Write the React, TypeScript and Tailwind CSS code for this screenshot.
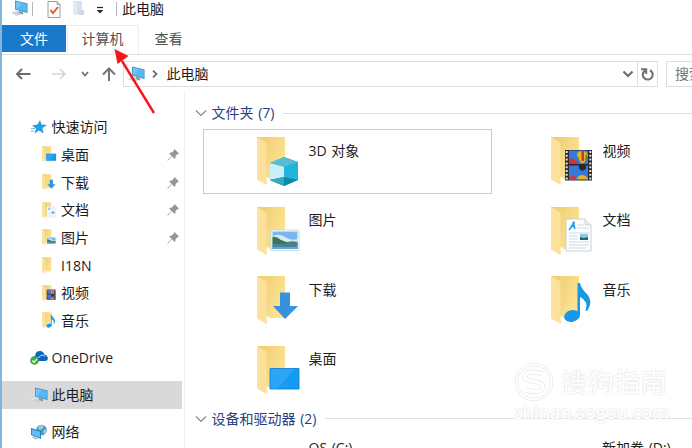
import type { ReactNode } from 'react'

type Kind = 'plain' | 'objects' | 'pictures' | 'downloads' | 'desktop' | 'videos' | 'documents' | 'music'

const quickAccess: { label: string; kind: Kind; pinned: boolean }[] = [
  { label: '桌面', kind: 'desktop', pinned: true },
  { label: '下载', kind: 'downloads', pinned: true },
  { label: '文档', kind: 'documents', pinned: true },
  { label: '图片', kind: 'pictures', pinned: true },
  { label: 'I18N', kind: 'plain', pinned: false },
  { label: '视频', kind: 'videos', pinned: false },
  { label: '音乐', kind: 'music', pinned: false },
]

const folders: { label: string; kind: Kind }[] = [
  { label: '3D 对象', kind: 'objects' },
  { label: '视频', kind: 'videos' },
  { label: '图片', kind: 'pictures' },
  { label: '文档', kind: 'documents' },
  { label: '下载', kind: 'downloads' },
  { label: '音乐', kind: 'music' },
  { label: '桌面', kind: 'desktop' },
]

const selectedTile = 'border-[#a3d6f7]'
const idleTile = 'border-transparent'

function Overlay({ kind }: { kind: Kind }) {
  switch (kind) {
    case 'objects':
      return (
        <g>
          <path d="M16 27 30 21 44 26 44 44 30 50 16 44Z" fill="#27abc9" />
          <path d="M16 27 30 21 44 26 30 31Z" fill="#58bdd3" />
          <path d="M16 27 30 31V41L16 44Z" fill="#c9f0f6" />
          <path d="M30 31 44 26V44L30 41Z" fill="#21b5dc" />
          <path d="M16 44 30 41 44 44 30 50Z" fill="#0c8aa9" />
          <path d="M16 44 30 41V50Z" fill="#38a9bd" />
        </g>
      )
    case 'pictures':
      return (
        <g>
          <path d="M17 24H45V44.500H17Z" fill="#fff" stroke="#bddcec" strokeWidth="1" />
          <path d="M18.500 25.500H43.500V43H18.500Z" fill="#79b7ed" />
          <path d="M18.500 30Q25 27 31 31T43.500 33V37H18.500Z" fill="#d3e9f8" />
          <path d="M18.500 31Q22 30 27 34L39 38.500H18.500Z" fill="#39774d" />
          <path d="M28 38Q36 34 43.500 36V39H28Z" fill="#4a8272" />
          <path d="M18.500 38.500H43.500V43H18.500Z" fill="#3f7fa8" />
          <path d="M18.500 41H43.500V43H18.500Z" fill="#6ea5c4" />
        </g>
      )
    case 'downloads':
      return <path d="M26 17.500H36V31H44L31 44 19 31H26Z" fill="#3492df" />
    case 'desktop':
      return (
        <g>
          <path d="M16 23.500H45V44H16Z" fill="#159bf1" stroke="#0878ce" strokeWidth=".8" />
          <path d="M16.500 24H40L24 43.500H16.500Z" fill="#38adf8" opacity=".6" />
        </g>
      )
    case 'videos':
      return (
        <g>
          <path d="M17 14H44V44.500H17Z" fill="#27292c" />
          <path d="M18.700 15V44M42.300 15V44" stroke="#e6e6e6" strokeWidth="2" strokeDasharray="2 1.800" />
          <path d="M21 14.500H40V28H21ZM21 29.500H40V44H21Z" fill="#3978d8" />
          <path d="M21 24Q22 21 25 23T30 26V28H21Z" fill="#d92e38" />
          <path d="M34.500 15Q28.500 15 29 20L33 27H36L40 21Q40 15 34.500 15Z" fill="#e3b622" />
          <path d="M33.500 15H36L36 25H33.500Z" fill="#d3362b" />
          <path d="M29 20 31 21.500 30.500 23ZM38 18 40 21 37 25Z" fill="#378646" />
          <path d="M31 28H38V33L34.500 35 31 33Z" fill="#252d2c" />
          <path d="M21.500 42Q24 38 28 41V44H21Z" fill="#cf3645" />
          <path d="M29 43Q30 39 34 39T40 43Z" fill="#e3b622" />
        </g>
      )
    case 'documents':
      return (
        <g>
          <path d="M18 13H37L43 19V45H18Z" fill="#fcfeff" stroke="#c3cdd2" strokeWidth=".9" />
          <path d="M37 13V19H43" fill="#e7edf0" stroke="#c3cdd2" strokeWidth=".8" />
          <path d="M21 24Q24 21 26 15.500Q25.500 20 27 23M22.500 20.500H27" fill="none" stroke="#2598df" strokeWidth="1.500" />
          <path d="M29 19H36M29 22H41M21 27H41M21 30H30M21 33H30M21 36H41M21 39H41M21 42H38" stroke="#c3d7e1" strokeWidth=".9" />
          <path d="M32 28H40V34H32Z" fill="#85c8eb" />
          <path d="M32 31 36 32 40 31V34H32Z" fill="#345b74" />
        </g>
      )
    case 'music':
      return (
        <g fill="#1799ea">
          <ellipse cx="24" cy="41" rx="8" ry="5.800" transform="rotate(-12 24 41)" />
          <path d="M29.500 8H32Q33 13 38 18Q46 26 39 36H37.500Q41 26 32 22V41H29.500Z" />
        </g>
      )
    default:
      return null
  }
}

function FolderIcon({ kind, className }: { kind: Kind; className: string }) {
  return (
    <svg viewBox="0 0 48 51" className={className}>
      <defs>
        <linearGradient id="back" x1="0" y1="0" x2="1" y2=".6">
          <stop offset="0" stopColor="#edcb70" />
          <stop offset="1" stopColor="#fde392" />
        </linearGradient>
        <linearGradient id="flap" x1="0" y1="0" x2="1" y2="0">
          <stop offset="0" stopColor="#fbe29d" />
          <stop offset="1" stopColor="#fbe09a" />
        </linearGradient>
      </defs>
      <path d="M3 1H31V43H3Z" fill="url(#back)" />
      <path d="M3 1 12.500 6.500V41L14 42 12.500 49 3 43.500Z" fill="url(#flap)" />
      <path d="M12.500 41.500H15V44L12.500 46Z" fill="#fffdf5" />
      <Overlay kind={kind} />
    </svg>
  )
}

function ComputerIcon({ className }: { className: string }) {
  return (
    <svg viewBox="0 0 18 16" className={className}>
      <path d="M0 12.500 7 10.500 14 13.500 7 15.800Z" fill="#cbd2d7" />
      <path d="M0 12.500 7 10.500 8 11 1.500 13Z" fill="#eef0f2" />
      <path d="M9 11 13 12V14.500L9 13Z" fill="#8b98a1" />
      <path d="M5 .5 17.500 3.500V13L5 9.500Z" fill="#3288bd" />
      <path d="M5.700 1.400 16.800 4.100V12L5.700 8.900Z" fill="#57b9f2" />
      <path d="M5.700 1.400 12 3 7 9.200 5.700 8.900Z" fill="#8ad3fa" opacity=".5" />
    </svg>
  )
}

function PinIcon() {
  return (
    <svg viewBox="0 0 12 12" className="h-3 w-3">
      <path d="M7.500 0 12 4.500 10.500 5.200 8.600 7.100Q8.800 9 7.700 10L5 7.300 1 11.500.4 11.600.5 11 4.700 7 2 4.300Q3.200 3.300 4.900 3.400L6.800 1.500Z" fill="#8d989f" />
    </svg>
  )
}

function NavRow({ icon, label, active = false }: { icon: ReactNode; label: string; active?: boolean }) {
  return (
    <div className={`flex h-7 w-[180px] items-center gap-1 pl-[27.500px] ${active ? 'bg-[#d9d9d9]' : ''}`}>
      <span className="flex w-[18px] shrink-0 justify-center">{icon}</span>
      <span>{label}</span>
    </div>
  )
}

function SectionHeading({ label }: { label: string }) {
  return (
    <div className="flex h-5 items-center pl-[9.500px] text-[#293d82] [word-spacing:1px]">
      <svg viewBox="0 0 12 8" className="mr-[5px] h-2 w-3">
        <path d="M1 1.500 6 6.500 11 1.500" fill="none" stroke="#858585" strokeWidth="1.100" />
      </svg>
      <span className="whitespace-pre">{label}</span>
      <div className="ml-[9px] h-px flex-1 bg-[#dedfe3]" />
    </div>
  )
}

function TitleBar() {
  return (
    <div className="flex h-[25px] shrink-0 items-start">
      <ComputerIcon className="ml-2 h-4 w-[18px]" />
      <div className="ml-[4px] mt-[2px] h-[14px] w-px bg-[#b5b5b5]" />
      <svg viewBox="0 0 14 17" className="ml-[14px] mt-px h-[17px] w-[14px]">
        <path d="M1 .5H10L13 3.500V16.500H1Z" fill="#fcfcfc" stroke="#9ba0a5" />
        <path d="M10 .5V3.500H13" fill="none" stroke="#9ba0a5" />
        <path d="M3.500 9 6 12 11 6" fill="none" stroke="#e55327" strokeWidth="1.800" />
      </svg>
      <svg viewBox="0 0 11 15" className="ml-[12px] mt-px h-[15px] w-[11px]">
        <path d="M0 0H9V13H0Z" fill="#dce2ed" />
        <path d="M0 0 4 2V15L0 13Z" fill="#e6eaf3" />
        <path d="M5 9H11V14H5Z" fill="#d1daea" />
      </svg>
      <svg viewBox="0 0 8 8" className="ml-[12px] mt-[6px] h-2 w-2">
        <path d="M1 1.500H7" stroke="#222" strokeWidth="1.200" />
        <path d="M.8 4H7.200L4 7.500Z" fill="#222" />
      </svg>
      <div className="ml-[12px] mt-[2px] h-[14px] w-px bg-[#b5b5b5]" />
      <span className="ml-[5px] leading-[17px]">此电脑</span>
    </div>
  )
}

function AddressBar() {
  return (
    <div className="flex h-[37px] shrink-0 items-start border-t border-[#dfe0e1] pt-[6px]">
      <div className="flex h-[26px] w-[121px] items-center pl-[13px]">
        <svg viewBox="0 0 16 12" className="h-3 w-4">
          <path d="M7 1 2 6 7 11M2 6H15.500" fill="none" stroke="#6b6b6b" strokeWidth="1.900" />
        </svg>
        <svg viewBox="0 0 16 12" className="ml-[20px] h-3 w-4">
          <path d="M9 1 14 6 9 11M14 6H1" fill="none" stroke="#d5d5d5" strokeWidth="1.500" />
        </svg>
        <svg viewBox="0 0 8 6" className="ml-[14px] h-[6px] w-2">
          <path d="M1 1 4 4.500 7 1" fill="none" stroke="#777" strokeWidth="1.800" />
        </svg>
        <svg viewBox="0 0 14 15" className="ml-[13px] h-[15px] w-[14px]">
          <path d="M1 7.500 7 1.500 13 7.500M7 2V14" fill="none" stroke="#757575" strokeWidth="2" />
        </svg>
      </div>
      <div className="flex h-[26px] w-[535px] items-center border border-[#dedede]">
        <ComputerIcon className="ml-[3px] h-4 w-[18px]" />
        <svg viewBox="0 0 6 8" className="ml-[7px] h-2 w-[6px]">
          <path d="M1 .7 4.500 4 1 7.300" fill="none" stroke="#666" strokeWidth="1.700" />
        </svg>
        <span className="ml-[8.500px]">此电脑</span>
        <svg viewBox="0 0 12 8" className="ml-auto mr-[3px] h-2 w-3">
          <path d="M1.500 1.500 6 6 10.500 1.500" fill="none" stroke="#6b6b6b" strokeWidth="2.100" />
        </svg>
        <div className="flex h-full w-5 items-center justify-center border-l border-[#dedede]">
          <svg viewBox="0 0 13 13" className="h-[13px] w-[13px]">
            <path d="M9 2.300A4.900 4.900 0 1 1 3 3.500L5 2" fill="none" stroke="#707070" strokeWidth="2.100" />
            <path d="M0 1.200H5.200V6" fill="none" stroke="#707070" strokeWidth="2" />
          </svg>
        </div>
      </div>
      <div className="ml-[8px] flex h-[26px] flex-1 items-center overflow-hidden border border-r-0 border-[#dedede] pl-[8px] whitespace-nowrap text-[#767676]">
        搜索"此电脑"
      </div>
    </div>
  )
}

function NavPane() {
  return (
    <div className="w-[183px] shrink-0 border-r border-[#f2f2f2] pt-[22px]">
      <NavRow
        label="快速访问"
        icon={
          <svg viewBox="0 0 16 16" className="h-4 w-4">
            <path d="M9 1 10.500 5.500 16 6 11.500 9 12.500 14.500 8 11.500 3.500 14.500 5 9.500 1 6.500 6.500 5.500Z" fill="#299be2" />
            <path d="M0 9.500H4M0 12H3" stroke="#74bce9" />
          </svg>
        }
      />
      {quickAccess.map(item => (
        <div key={item.label} className="flex h-[27.700px] items-center pl-[39px] pr-[5px]">
          <FolderIcon kind={item.kind} className="h-[17px] w-4 shrink-0" />
          <span className="ml-[4px]">{item.label}</span>
          {item.pinned && <span className="ml-auto"><PinIcon /></span>}
        </div>
      ))}
      <div className="mt-[9px]">
        <NavRow
          label="OneDrive"
          icon={
            <svg viewBox="0 0 18 15" className="h-[15px] w-[18px]">
              <path d="M5 11Q2 10.500 3 7.500Q3.500 6 5 6Q5.500 1 10 1Q13.500 1 14.200 4.500Q17.500 5 17.800 8T15 11Z" fill="#0b66bd" />
              <path d="M7 11Q6 7.500 9.500 6.800Q12 3.500 15 6.500" fill="none" stroke="#fff" strokeWidth=".8" />
              <circle cx="4.500" cy="10.500" r="4.300" fill="#3dac3d" />
              <path d="M2.300 10.500 4 12.300 7 8.800" fill="none" stroke="#fff" strokeWidth="1.300" />
            </svg>
          }
        />
      </div>
      <div className="mt-[9px]">
        <NavRow label="此电脑" active icon={<ComputerIcon className="h-4 w-[18px]" />} />
      </div>
      <div className="mt-[9px]">
        <NavRow
          label="网络"
          icon={
            <svg viewBox="0 0 17 16" className="h-4 w-[17px]">
              <circle cx="11.500" cy="6" r="5.300" fill="#4b9abd" />
              <path d="M8 3Q11 0 14 2L12 5 9 6ZM13 7 16 5Q17 8 14 10Z" fill="#9bd0e0" />
              <path d="M1 4 11 7V15L1 11Z" fill="#2778af" />
              <path d="M1.800 5.200 10.200 7.700V13.700L1.800 10.400Z" fill="#5ebef4" />
              <path d="M3 12.500 8 14.500 6 15.500 2 13.500Z" fill="#a9b6be" />
            </svg>
          }
        />
      </div>
    </div>
  )
}

function Watermark() {
  return (
    <div className="absolute left-[512px] top-[362px] w-[160px] text-white [text-shadow:0_0_2px_#cfcfcf]">
      <div className="flex h-10 items-center gap-[7px]">
        <svg viewBox="0 0 40 40" className="h-10 w-10">
          <circle cx="20" cy="20" r="17.500" fill="none" stroke="#e9e9e9" strokeWidth="3.500" />
          <circle cx="20" cy="20" r="17.500" fill="none" stroke="#fff" strokeWidth="2" />
          <path d="M29 12Q12 7 11 15C10 21 29 17 29 25Q28 32 11 28" fill="none" stroke="#e9e9e9" strokeWidth="5" />
          <path d="M29 12Q12 7 11 15C10 21 29 17 29 25Q28 32 11 28" fill="none" stroke="#fff" strokeWidth="3.500" />
        </svg>
        <span className="text-[26.500px] leading-10">搜狗指南</span>
      </div>
      <div className="text-[18px] font-semibold leading-5 tracking-[-0.150px]">zhinan.sogou.com</div>
    </div>
  )
}

export default function App() {
  return (
    <div className="relative flex h-[448px] w-[692px] flex-col overflow-hidden border-l-2 border-[#86b5dc] bg-white font-['Open_Sans','Noto_Sans_CJK_SC',sans-serif] text-[14px] leading-5 text-[#1c1c1c]">
      <TitleBar />
      <div className="flex h-[29px] shrink-0 items-stretch text-[#505050]">
        <div className="mb-[2px] flex w-16 items-center justify-center bg-[#1979ca] text-white">文件</div>
        <div className="ml-px flex w-[72px] items-center border-x border-t border-[#ededed] pb-[2px] pl-[13.500px]">计算机</div>
        <div className="ml-[15.500px] flex items-center pb-[2px]">查看</div>
      </div>
      <AddressBar />
      <div className="flex min-h-0 flex-1">
        <NavPane />
        <div className="min-w-0 flex-1 pt-[12px]">
          <SectionHeading label="文件夹 (7)" />
          <div className="ml-[18px] mt-[6px] grid auto-rows-[65px] grid-cols-[289px_289px] gap-x-[5px] gap-y-[4.500px]">
            {folders.map(folder => (
              <div key={folder.label} className={`flex border pl-[50px] pt-[6px] [word-spacing:1px] ${folder.kind === 'objects' ? selectedTile : idleTile}`}>
                <FolderIcon kind={folder.kind} className="h-[51px] w-12" />
                <span className="ml-[6.500px] mt-[4.500px]">{folder.label}</span>
              </div>
            ))}
          </div>
          <div className="mt-[6px]">
            <SectionHeading label="设备和驱动器 (2)" />
          </div>
          <div className="ml-[18px] mt-[9px] grid grid-cols-[289px_289px] gap-x-[5px] whitespace-nowrap [word-spacing:1px]">
            <span className="pl-[105.500px]">OS (C:)</span>
            <span className="pl-[105px]">新加卷 (D:)</span>
          </div>
        </div>
      </div>
      <Watermark />
      {/* callout arrow pointing at the computer tab */}
      <svg viewBox="0 0 50 72" className="absolute left-[106px] top-[45px] h-[72px] w-[50px]">
        <path d="M14 16 46 68" stroke="#f51717" strokeWidth="2.400" />
        <path d="M6.500 4 20.500 11 9.500 19Z" fill="#f51717" />
      </svg>
    </div>
  )
}
